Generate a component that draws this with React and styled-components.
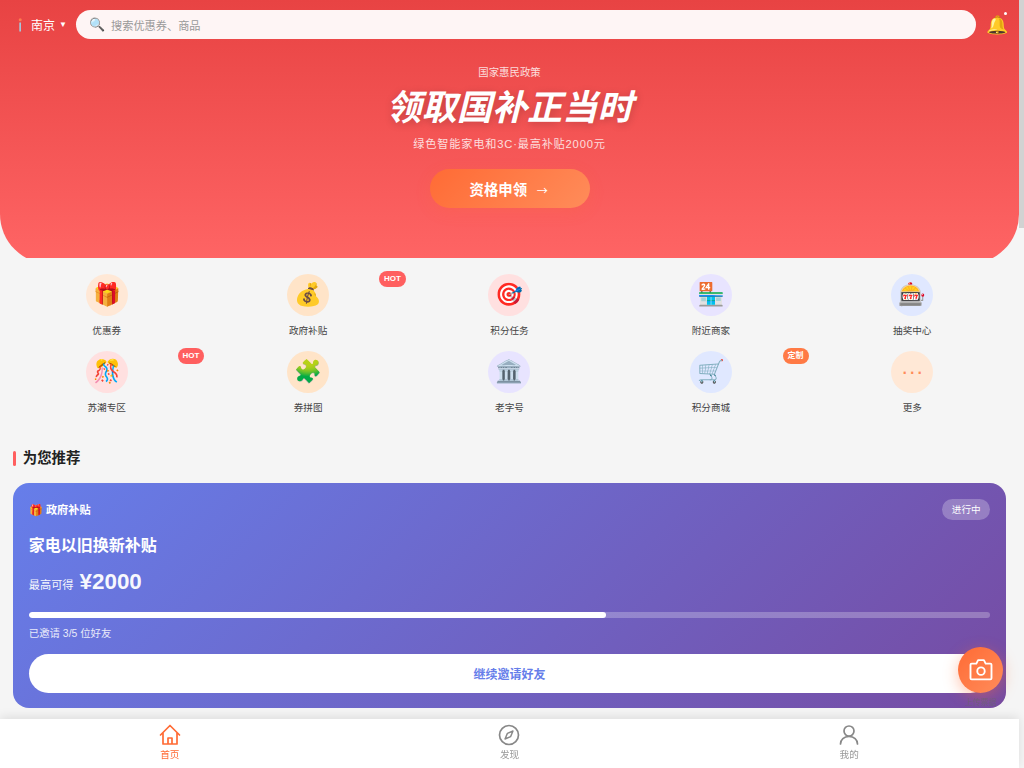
import React from 'react';
import styled, { createGlobalStyle } from 'styled-components';

const Global = createGlobalStyle`
  html, body { margin: 0; padding: 0; }
  body {
    background: #f5f5f5;
    font-family: "Liberation Sans", "Noto Sans CJK SC", sans-serif;
    overflow-x: hidden;
  }
  * { box-sizing: border-box; }
`;

const Page = styled.div`
  width: 1019px;
  min-height: 2590px;
  padding-bottom: 60px;
`;

const ScrollThumb = styled.div`
  position: fixed;
  top: 0;
  right: 0;
  width: 5px;
  height: 228px;
  background: #d2d2d2;
`;

const HeroClip = styled.div`
  height: 258px;
  overflow: hidden;
`;

const Hero = styled.header`
  height: 264px;
  background: linear-gradient(180deg, #e84343 0%, #ff6565 100%);
  border-radius: 0 0 50px 50px;
  padding-top: 10px;
`;

const TopBar = styled.div`
  display: flex;
  align-items: center;
  height: 29px;
  padding: 0 13px 0 18px;
`;

const City = styled.div`
  display: flex;
  align-items: center;
  width: 58px;
  color: #fff;
  font-size: 12px;
`;

const PinIcon = styled.svg`
  width: 4px;
  height: 14px;
  margin-right: 9px;
`;

const Caret = styled.span`
  margin-left: 4px;
  font-size: 8px;
`;

const Search = styled.div`
  flex: 1;
  height: 29px;
  border-radius: 15px;
  background: rgba(255, 255, 255, 0.95);
  display: flex;
  align-items: center;
  padding-left: 13px;
  gap: 6px;
  font-size: 11.2px;
  color: #999;
`;

const SearchGlyph = styled.span`
  font-size: 13px;
`;

const Bell = styled.div`
  position: relative;
  margin-left: 10px;
  width: 20px;
  font-size: 18px;
  line-height: 1;
`;

const BellDot = styled.span`
  position: absolute;
  top: -4px;
  right: -1px;
  width: 3px;
  height: 3px;
  border-radius: 50%;
  background: #fff;
`;

const Promo = styled.div`
  display: flex;
  flex-direction: column;
  align-items: center;
  color: #fff;
  padding-top: 26px;
`;

const Kicker = styled.div`
  font-size: 10.4px;
  line-height: 16px;
  opacity: 0.8;
`;

const Headline = styled.h1`
  margin: 3px 0 0;
  font-size: 35.2px;
  line-height: 48px;
  font-weight: 700;
  font-style: italic;
  text-shadow: 0 2px 8px rgba(0, 0, 0, 0.2);
`;

const Sub = styled.div`
  margin-top: 3px;
  font-size: 11.2px;
  line-height: 18px;
  letter-spacing: 0.8px;
  opacity: 0.8;
`;

const CTA = styled.button`
  margin-top: 16px;
  width: 160px;
  height: 39px;
  border: 0;
  border-radius: 20px;
  background: linear-gradient(135deg, #ff6b35, #ff8c5a);
  box-shadow: 0 4px 15px rgba(255, 107, 53, 0.2);
  color: #fff;
  font: 700 14.4px "Liberation Sans", "Noto Sans CJK SC", sans-serif;
`;

const Arrow = styled.span`
  display: inline-block;
  width: 14.4px;
  margin-left: 4px;
  text-align: center;
  font-family: "Noto Sans CJK SC", sans-serif;
  font-size: 11px;
  font-weight: 400;
`;

const Grid = styled.nav`
  display: grid;
  grid-template-columns: repeat(5, 1fr);
  column-gap: 12px;
  row-gap: 12px;
  padding: 16px 12px 0;
`;

const Item = styled.div`
  position: relative;
  display: flex;
  flex-direction: column;
  align-items: center;
  height: 65px;
`;

const Circle = styled.div`
  width: 42px;
  height: 42px;
  padding-top: 1px;
  border-radius: 50%;
  background: ${p => p.$bg};
  color: #ff8c5a;
  display: flex;
  align-items: center;
  justify-content: center;
  font-size: 22.4px;
  line-height: 1;
`;

const Label = styled.span`
  margin-top: 7px;
  font-size: 9.6px;
  line-height: 16px;
  color: #444;
`;

const Badge = styled.span`
  position: absolute;
  top: -3px;
  right: -3px;
  height: 16px;
  padding: 0 5px;
  border-radius: 8px;
  background: ${p => p.$bg};
  color: #fff;
  font-size: 8px;
  font-weight: 700;
  line-height: 16px;
`;

const Section = styled.section`
  padding: 31px 12.8px 0;
`;

const SectionTitle = styled.h2`
  display: flex;
  align-items: center;
  gap: 7px;
  margin: 0 0 14px;
  font-size: 14.4px;
  line-height: 22px;
  font-weight: 700;
  color: #222;
  &::before {
    content: "";
    width: 3px;
    height: 15px;
    border-radius: 2px;
    background: #ff5f5f;
  }
`;

const Card = styled.article`
  height: 225px;
  padding: 16px;
  border-radius: 16px;
  background: linear-gradient(135deg, #667eea 0%, #764ba2 100%);
  color: #fff;
`;

const CardHead = styled.div`
  display: flex;
  justify-content: space-between;
  align-items: center;
  height: 21px;
`;

const CardTag = styled.span`
  margin-top: -2px;
  font-size: 11.2px;
  font-weight: 700;
`;

const Status = styled.span`
  height: 21px;
  padding: 0 9.6px;
  border-radius: 11px;
  background: rgba(255, 255, 255, 0.25);
  font-size: 9.6px;
  line-height: 21px;
`;

const CardTitle = styled.h3`
  margin: 13px 0 0;
  font-size: 16px;
  line-height: 26px;
  font-weight: 700;
`;

const Amount = styled.div`
  display: flex;
  align-items: baseline;
  gap: 6px;
  margin-top: 7px;
  font-size: 11.2px;
  opacity: 0.95;
`;

const Price = styled.strong`
  font-size: 22.4px;
  line-height: 32px;
`;

const Track = styled.div`
  margin-top: 14px;
  height: 6.4px;
  border-radius: 4px;
  background: rgba(255, 255, 255, 0.25);
  overflow: hidden;
`;

const Fill = styled.div`
  height: 100%;
  border-radius: 4px;
  background: #fff;
`;

const Invited = styled.div`
  margin-top: 8px;
  font-size: 10.4px;
  line-height: 16px;
  opacity: 0.85;
`;

const CardButton = styled.button`
  display: block;
  width: 100%;
  height: 38.4px;
  margin-top: 12px;
  border: 0;
  border-radius: 20px;
  background: #fff;
  color: #667eea;
  font: 700 12px "Liberation Sans", "Noto Sans CJK SC", sans-serif;
`;

const Fab = styled.div`
  position: fixed;
  left: 958px;
  top: 647px;
  width: 45px;
  display: flex;
  flex-direction: column;
  align-items: center;
`;

const FabCircle = styled.div`
  width: 45px;
  height: 46px;
  border-radius: 50%;
  background: linear-gradient(135deg, #ff6b35, #ff8c5a);
  box-shadow: 0 4px 15px rgba(255, 107, 53, 0.4);
  display: flex;
  align-items: center;
  justify-content: center;
`;

const FabLabel = styled.span`
  margin-top: 3px;
  font-size: 8px;
  line-height: 14px;
  white-space: nowrap;
  color: #666;
  opacity: 0.6;
`;

const BottomNav = styled.footer`
  position: fixed;
  left: 0;
  right: 5px;
  bottom: 0;
  height: 49px;
  background: #fff;
  box-shadow: 0 -2px 10px rgba(0, 0, 0, 0.1);
  display: grid;
  grid-template-columns: repeat(3, 1fr);
`;

const NavItem = styled.div`
  display: flex;
  flex-direction: column;
  align-items: center;
  padding-top: 5px;
  color: ${p => (p.$active ? '#ff6b35' : '#999')};
  font-size: 9.6px;
  line-height: 14px;
`;

const NavIcon = styled.svg`
  display: block;
  width: 22px;
  height: 22px;
  margin-bottom: 2px;
  fill: none;
  stroke: ${p => (p.$active ? '#ff6b35' : '#888')};
  stroke-width: 1.7;
  stroke-linecap: round;
  stroke-linejoin: round;
`;

const CameraIcon = styled.svg`
  width: 28px;
  height: 28px;
  fill: none;
  stroke: #fff;
  stroke-width: 1.6;
  stroke-linejoin: round;
`;

const items = [
  ['🎁', '优惠券', '#ffe8d6'],
  ['💰', '政府补贴', '#ffe4c8', 'HOT', '#ff5f5f'],
  ['🎯', '积分任务', '#ffe0e0'],
  ['🏪', '附近商家', '#e8e4ff'],
  ['🎰', '抽奖中心', '#e0e8ff'],
  ['🎊', '苏潮专区', '#ffe0e0', 'HOT', '#ff5f5f'],
  ['🧩', '券拼图', '#ffe4c8'],
  ['🏛️', '老字号', '#e8e4ff'],
  ['🛒', '积分商城', '#e0e8ff', '定制', '#ff7a45'],
  ['···', '更多', '#ffe8d6'],
];

export default function App() {
  return (
    <Page>
      <Global />
      <ScrollThumb />
      <HeroClip>
        <Hero>
          <TopBar>
            <City>
              <PinIcon viewBox="0 0 4 14">
                <circle cx="2.200" cy="1.800" r="1.500" fill="#ff7a50" />
                <rect x="1.300" y="4.500" width="1.700" height="9" fill="#a8c4d8" />
              </PinIcon>
              南京<Caret>▼</Caret>
            </City>
            <Search><SearchGlyph>🔍</SearchGlyph>搜索优惠券、商品</Search>
            <Bell>🔔<BellDot /></Bell>
          </TopBar>
          <Promo>
            <Kicker>国家惠民政策</Kicker>
            <Headline>领取国补正当时</Headline>
            <Sub>绿色智能家电和3C·最高补贴2000元</Sub>
            <CTA>资格申领 <Arrow>→</Arrow></CTA>
          </Promo>
        </Hero>
      </HeroClip>
      <Grid>
        {items.map(([icon, label, bg, badge, badgeBg]) => (
          <Item key={label}>
            <Circle $bg={bg}>{icon}</Circle>
            <Label>{label}</Label>
            {badge && <Badge $bg={badgeBg}>{badge}</Badge>}
          </Item>
        ))}
      </Grid>
      <Section>
        <SectionTitle>为您推荐</SectionTitle>
        <Card>
          <CardHead>
            <CardTag>🎁 政府补贴</CardTag>
            <Status>进行中</Status>
          </CardHead>
          <CardTitle>家电以旧换新补贴</CardTitle>
          <Amount>最高可得 <Price>¥2000</Price></Amount>
          <Track><Fill style={{ width: '60%' }} /></Track>
          <Invited>已邀请 3/5 位好友</Invited>
          <CardButton>继续邀请好友</CardButton>
        </Card>
      </Section>
      <Fab>
        <FabCircle>
          <CameraIcon viewBox="0 0 24 24">
            <path d="M3 7.500a1 1 0 0 1 1-1h4l1.500-3h5L16 6.500h4a1 1 0 0 1 1 1V19a1 1 0 0 1-1 1H4a1 1 0 0 1-1-1Z" />
            <circle cx="12" cy="13" r="3.200" />
          </CameraIcon>
        </FabCircle>
        <FabLabel>上传票据</FabLabel>
      </Fab>
      <BottomNav>
        <NavItem $active>
          <NavIcon $active viewBox="0 0 22 22">
            <path d="M1.500 11 11 1.500 20.500 11M4 9v11h14V9M9 20v-6h4v6" />
          </NavIcon>
          首页
        </NavItem>
        <NavItem>
          <NavIcon viewBox="0 0 22 22">
            <circle cx="11" cy="11" r="9.500" />
            <path strokeWidth="1.400" d="m15 7-2.400 5.600L7 15l2.400-5.600Z" />
          </NavIcon>
          发现
        </NavItem>
        <NavItem>
          <NavIcon viewBox="0 0 22 22">
            <circle cx="11" cy="7" r="5" />
            <path d="M2.500 20c0-4.500 3.500-7.500 8.500-7.500s8.500 3 8.500 7.500" />
          </NavIcon>
          我的
        </NavItem>
      </BottomNav>
    </Page>
  );
}
